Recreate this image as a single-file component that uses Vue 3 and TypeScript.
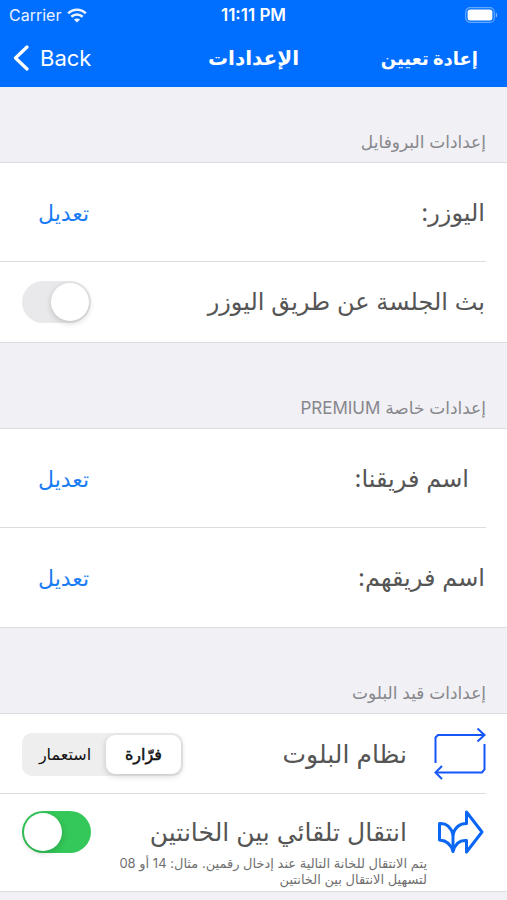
<script setup lang="ts">
import { ref } from 'vue'

interface TeamRow {
  id: string
  label: string
  inset: boolean
}

const broadcast = ref(false)
const autoAdvance = ref(true)
const system = ref('farrara')

const teams: TeamRow[] = [
  { id: 'ours', label: 'اسم فريقنا:', inset: true },
  { id: 'theirs', label: 'اسم فريقهم:', inset: false },
]

const systems = [
  { value: 'farrara', label: 'فرّارة' },
  { value: 'istimar', label: 'استعمار' },
]
</script>

<template>
  <div class="screen" dir="rtl" lang="ar">
    <header class="top" dir="ltr">
      <div class="status">
        <div class="carrier">
          <span>Carrier</span>
          <svg class="wifi" viewBox="0 0 20 15" aria-hidden="true">
            <path d="M1.2 5.4C6.2.6 13.8.6 18.8 5.4" />
            <path d="M4.3 8.7c3.3-3 8.1-3 11.4 0" />
            <path class="dot" d="M10 14.6 6.9 11.5c1.8-1.5 4.4-1.5 6.2 0z" />
          </svg>
        </div>
        <span class="time">11:11 PM</span>
        <svg class="battery" viewBox="0 0 33 16" aria-hidden="true">
          <rect class="shell" x=".7" y=".7" width="28.6" height="14.6" rx="4.5" />
          <rect class="charge" x="2.6" y="2.6" width="24.8" height="10.8" rx="2.6" />
          <path class="cap" d="M30.8 5.4c1.8.8 1.8 4.4 0 5.2z" />
        </svg>
      </div>
      <nav class="nav">
        <button class="back" type="button" lang="en">
          <svg class="chevron" viewBox="0 0 16 26" aria-hidden="true">
            <path d="M14 2 2.5 13 14 24" />
          </svg>
          <span>Back</span>
        </button>
        <h1 class="title">الإعدادات</h1>
        <button class="reset" type="button">إعادة تعيين</button>
      </nav>
    </header>

    <main>
      <section>
        <h2 class="heading first">إعدادات البروفايل</h2>
        <div class="group">
          <div class="row tall">
            <span class="label">اليوزر:</span>
            <button class="edit" type="button">تعديل</button>
          </div>
          <div class="row">
            <label class="label" for="broadcast">بث الجلسة عن طريق اليوزر</label>
            <input id="broadcast" v-model="broadcast" class="switch" type="checkbox" role="switch" />
          </div>
        </div>
      </section>

      <section>
        <h2 class="heading">إعدادات خاصة PREMIUM</h2>
        <div class="group">
          <div v-for="team in teams" :key="team.id" class="row tall">
            <span class="label" :class="{ inset: team.inset }">{{ team.label }}</span>
            <button class="edit" type="button">تعديل</button>
          </div>
        </div>
      </section>

      <section>
        <h2 class="heading">إعدادات قيد البلوت</h2>
        <div class="group">
          <div class="row">
            <svg class="icon" viewBox="0 0 54 54" aria-hidden="true">
              <g class="thin">
                <path d="M2.500 36V10.500L5 8h46" />
                <path d="M44.500 1.500 51.500 8l-7 6.500" />
                <path d="M51.500 17v25.500L49 45.500H3" />
                <path d="M9 39 2.500 45.500 9 52" />
              </g>
            </svg>
            <span id="system-label" class="label indented">نظام البلوت</span>
            <div class="segmented" role="radiogroup" aria-labelledby="system-label">
              <label v-for="item in systems" :key="item.value" class="segment">
                <input v-model="system" type="radio" name="system" :value="item.value" />
                <span>{{ item.label }}</span>
              </label>
            </div>
          </div>
          <div class="row last">
            <svg class="icon" viewBox="0 0 54 54" aria-hidden="true">
              <path
                class="bold"
                d="M6.500 18.500c7.500-.5 11.500 4 13.500 11 2-7 6-11 13.500-11V7L49 27 33.500 47V35.500c-6.500-.5-11.500 3.500-13.500 11-2-7.500-6-11-13.500-11.500z"
              />
              <path class="bold" d="M20 29v16" />
            </svg>
            <div class="text">
              <label class="label indented" for="advance">انتقال تلقائي بين الخانتين</label>
              <p class="note">
                يتم الانتقال للخانة التالية عند إدخال رقمين. مثال: 14 أو 08<br />لتسهيل الانتقال بين الخانتين
              </p>
            </div>
            <input id="advance" v-model="autoAdvance" class="switch" type="checkbox" role="switch" />
          </div>
        </div>
      </section>
    </main>
  </div>
</template>

<style>
body {
  margin: 0;
  background: #f0f0f5;
}
</style>

<style scoped>
.screen {
  min-height: 100vh;
  background: #f0f0f5;
  color: #555;
  font-family: Inter, 'DejaVu Sans', sans-serif;
}

button {
  padding: 0;
  border: 0;
  background: none;
  font: inherit;
  cursor: pointer;
}

.top {
  height: 87px;
  background: #006eff;
  color: #fff;
}

.status {
  display: grid;
  grid-template-columns: 1fr auto 1fr;
  align-items: center;
  height: 30px;
  padding: 0 9px;
  font-size: 16px;
}

.carrier {
  display: flex;
  align-items: center;
  gap: 6px;
  opacity: 0.92;
}

.wifi {
  width: 20px;
  height: 15px;
  fill: none;
  stroke: #fff;
  stroke-width: 2.6;
}

.wifi .dot {
  fill: #fff;
  stroke: none;
}

.time {
  font-size: 17px;
  font-weight: 600;
}

.battery {
  justify-self: end;
  width: 33px;
  height: 16px;
}

.shell {
  fill: none;
  stroke: #fff;
  stroke-opacity: 0.4;
  stroke-width: 1.2;
}

.charge {
  fill: #fff;
}

.cap {
  fill: #fff;
  fill-opacity: 0.5;
}

.nav {
  display: grid;
  grid-template-columns: 1fr auto 1fr;
  align-items: center;
  height: 56px;
  padding: 0 13px;
}

.back {
  display: flex;
  align-items: center;
  justify-self: start;
  gap: 11px;
  font-size: 22px;
}

.back,
.reset {
  color: #fff;
}

.chevron {
  width: 16px;
  height: 26px;
  fill: none;
  stroke: #fff;
  stroke-width: 3.2;
  stroke-linecap: round;
  stroke-linejoin: round;
}

.title {
  margin: 0;
  font-size: 20px;
  font-weight: 700;
}

.reset {
  justify-self: end;
  padding-right: 16px;
  font-size: 18px;
  font-weight: 700;
}

.heading {
  display: flex;
  align-items: flex-end;
  box-sizing: border-box;
  height: 85px;
  margin: 0;
  padding: 0 21px 10px;
  color: #87878c;
  font-size: 17px;
  font-weight: 400;
  line-height: 20px;
}

.heading.first {
  height: 75px;
}

.group {
  border-top: 1px solid #dcdce0;
  border-bottom: 1px solid #dcdce0;
  background: #fff;
}

.row {
  position: relative;
  display: flex;
  align-items: center;
  box-sizing: border-box;
  min-height: 80px;
  padding: 0 22px;
}

.row.tall {
  min-height: 99px;
}

.row.last {
  align-items: flex-start;
  min-height: 97px;
  padding-top: 17px;
}

.row:not(:last-child)::after {
  position: absolute;
  right: 21px;
  bottom: 0;
  left: 0;
  height: 1px;
  background: #dcdce0;
  content: '';
}

.label {
  margin-left: auto;
  font-size: 24px;
  line-height: 32px;
}

.label.inset {
  padding-right: 16px;
}

.label.indented {
  padding-right: 20px;
  font-size: 25px;
}

.edit {
  margin-left: 16px;
  color: #1a7cf5;
  font-size: 22px;
  line-height: 32px;
}

.icon {
  flex: none;
  width: 54px;
  height: 54px;
  margin: -6px -2px -6px 6px;
  fill: none;
}

.thin {
  stroke: #1556fa;
  stroke-width: 2;
}

.bold {
  stroke: #0a66f5;
  stroke-width: 3;
  stroke-linejoin: round;
}

.text {
  display: flex;
  flex: 1;
  flex-direction: column;
  align-self: flex-end;
  align-items: flex-start;
  min-width: 0;
  margin-left: -40px;
  padding-bottom: 4px;
}

.note {
  margin: 7px 0 0;
  color: #707070;
  font-size: 13px;
  line-height: 16px;
  white-space: nowrap;
}

.switch {
  position: relative;
  flex: none;
  width: 69px;
  height: 42px;
  margin: 0;
  border-radius: 21px;
  background: #e9e9eb;
  appearance: none;
  cursor: pointer;
}

.switch::before {
  position: absolute;
  top: 2px;
  right: 2px;
  width: 38px;
  height: 38px;
  border-radius: 50%;
  background: #fff;
  box-shadow: 0 2px 6px rgb(0 0 0 / 18%);
  content: '';
}

.switch:checked {
  background: #34c759;
}

.switch:checked::before {
  right: auto;
  left: 2px;
}

.segmented {
  display: grid;
  grid-template-columns: 75fr 82fr;
  box-sizing: border-box;
  width: 161px;
  height: 43px;
  padding: 2px;
  border-radius: 10px;
  background: #eeeeef;
}

.segment {
  position: relative;
  cursor: pointer;
}

.segment input {
  position: absolute;
  inset: 0;
  margin: 0;
  appearance: none;
}

.segment span {
  display: flex;
  align-items: center;
  justify-content: center;
  height: 100%;
  border-radius: 9px;
  color: #111;
  font-size: 16px;
}

.segment input:checked + span {
  background: #fff;
  box-shadow: 0 2px 6px rgb(0 0 0 / 18%);
  -webkit-text-stroke: 0.5px #111;
}
</style>
